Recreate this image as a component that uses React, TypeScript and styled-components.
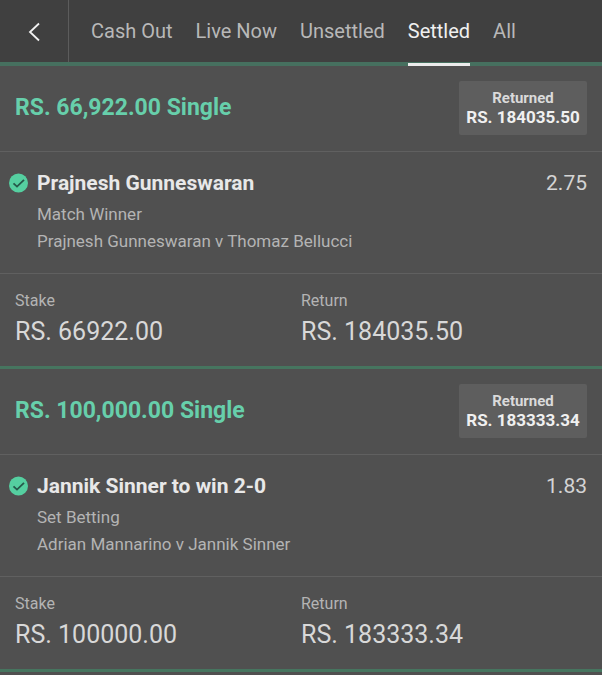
import React from "react";
import styled, { createGlobalStyle } from "styled-components";

const GlobalStyle = createGlobalStyle`
  *, *::before, *::after { box-sizing: border-box; }
  body {
    margin: 0;
    background: #505050;
    color: #e0e0e0;
    font-family: Roboto, "Liberation Sans", sans-serif;
  }
  h2, h3, p, dl, dd { margin: 0; }
`;

const Header = styled.header`
  display: flex;
  height: 66px;
  background: #404040;
  border-bottom: 4px solid #46705f;
`;

const BackButton = styled.button`
  display: flex;
  align-items: center;
  justify-content: center;
  flex: none;
  width: 69px;
  padding: 2px 0 0;
  border: 0;
  border-right: 1px solid #5c5c5c;
  background: none;
  color: #f2f2f2;
  cursor: pointer;
`;

const Tabs = styled.nav`
  display: flex;
  gap: 23px;
  padding-left: 22px;
`;

const Tab = styled.a<{ $active?: boolean }>`
  height: 66px;
  border-bottom: 3px solid ${(p) => (p.$active ? "#ececec" : "transparent")};
  color: ${(p) => (p.$active ? "#f0f0f0" : "#b8b8b8")};
  font-size: 20px;
  line-height: 62px;
  text-decoration: none;
  white-space: nowrap;
`;

const Bet = styled.article`
  border-bottom: 3px solid #46755f;
`;

const Summary = styled.div`
  display: flex;
  align-items: center;
  justify-content: space-between;
  height: 86px;
  padding: 0 15px 1px;
  border-bottom: 1px solid #606060;
`;

const Title = styled.h2`
  color: #67cfab;
  font-size: 23px;
  font-weight: 700;
  line-height: 28px;
`;

const Returned = styled.div`
  min-width: 128px;
  padding: 8px 7px;
  border-radius: 2px;
  background: #5e5e5e;
  color: #f0f0f0;
  font-size: 17px;
  font-weight: 700;
  line-height: 19px;
  text-align: center;
`;

const ReturnedLabel = styled.p`
  color: #dadada;
  font-size: 15px;
`;

const Selection = styled.section`
  display: grid;
  grid-template-columns: 20px 1fr auto;
  column-gap: 8px;
  height: 122px;
  padding: 16px 15px 0 9px;
  border-bottom: 1px solid #606060;
`;

const Tick = styled.svg`
  margin-top: 5px;
`;

const Name = styled.h3`
  margin-bottom: 3px;
  color: #e8e8e8;
  font-size: 21px;
  font-weight: 700;
  line-height: 30px;
`;

const Detail = styled.p`
  color: #b4b4b4;
  font-size: 17px;
  line-height: 27px;
`;

const Odds = styled.span`
  color: #d4d4d4;
  font-size: 21px;
  line-height: 30px;
`;

const Amounts = styled.dl`
  display: grid;
  grid-template-columns: 1fr 1fr;
  height: 92px;
  padding: 16px 15px 0;
`;

const AmountLabel = styled.dt`
  color: #b4b4b4;
  font-size: 16px;
  line-height: 22px;
`;

const AmountValue = styled.dd`
  padding-top: 4px;
  color: #d8d8d8;
  font-size: 25px;
  line-height: 32px;
`;

const tabs = ["Cash Out", "Live Now", "Unsettled", "Settled", "All"];

const bets = [
  {
    title: "RS. 66,922.00 Single",
    name: "Prajnesh Gunneswaran",
    market: "Match Winner",
    fixture: "Prajnesh Gunneswaran v Thomaz Bellucci",
    odds: "2.75",
    stake: "RS. 66922.00",
    returned: "RS. 184035.50",
  },
  {
    title: "RS. 100,000.00 Single",
    name: "Jannik Sinner to win 2-0",
    market: "Set Betting",
    fixture: "Adrian Mannarino v Jannik Sinner",
    odds: "1.83",
    stake: "RS. 100000.00",
    returned: "RS. 183333.34",
  },
];

export default function App() {
  return (
    <>
      <GlobalStyle />
      <Header>
        <BackButton type="button" aria-label="Back">
          <svg width="14" height="20" viewBox="0 0 14 20" fill="none" stroke="currentColor" strokeWidth="1.8">
            <path d="M12 1.5 L3 10 L12 18.5" />
          </svg>
        </BackButton>
        <Tabs>
          {tabs.map((t) => (
            <Tab key={t} href="#" $active={t === "Settled"} aria-current={t === "Settled" ? "page" : undefined}>
              {t}
            </Tab>
          ))}
        </Tabs>
      </Header>
      <main>
        {bets.map((b) => (
          <Bet key={b.title}>
            <Summary>
              <Title>{b.title}</Title>
              <Returned>
                <ReturnedLabel>Returned</ReturnedLabel>
                <p>{b.returned}</p>
              </Returned>
            </Summary>
            <Selection>
              <Tick width="20" height="20" viewBox="0 0 20 20" fill="none" aria-hidden="true">
                <circle cx="9.5" cy="10" r="9.5" fill="#55cfa0" />
                <path d="M4.5 10.3 L8 13.6 L15 6.8" stroke="#26594a" strokeWidth="1.8" />
              </Tick>
              <div>
                <Name>{b.name}</Name>
                <Detail>{b.market}</Detail>
                <Detail>{b.fixture}</Detail>
              </div>
              <Odds>{b.odds}</Odds>
            </Selection>
            <Amounts>
              <div>
                <AmountLabel>Stake</AmountLabel>
                <AmountValue>{b.stake}</AmountValue>
              </div>
              <div>
                <AmountLabel>Return</AmountLabel>
                <AmountValue>{b.returned}</AmountValue>
              </div>
            </Amounts>
          </Bet>
        ))}
      </main>
    </>
  );
}
